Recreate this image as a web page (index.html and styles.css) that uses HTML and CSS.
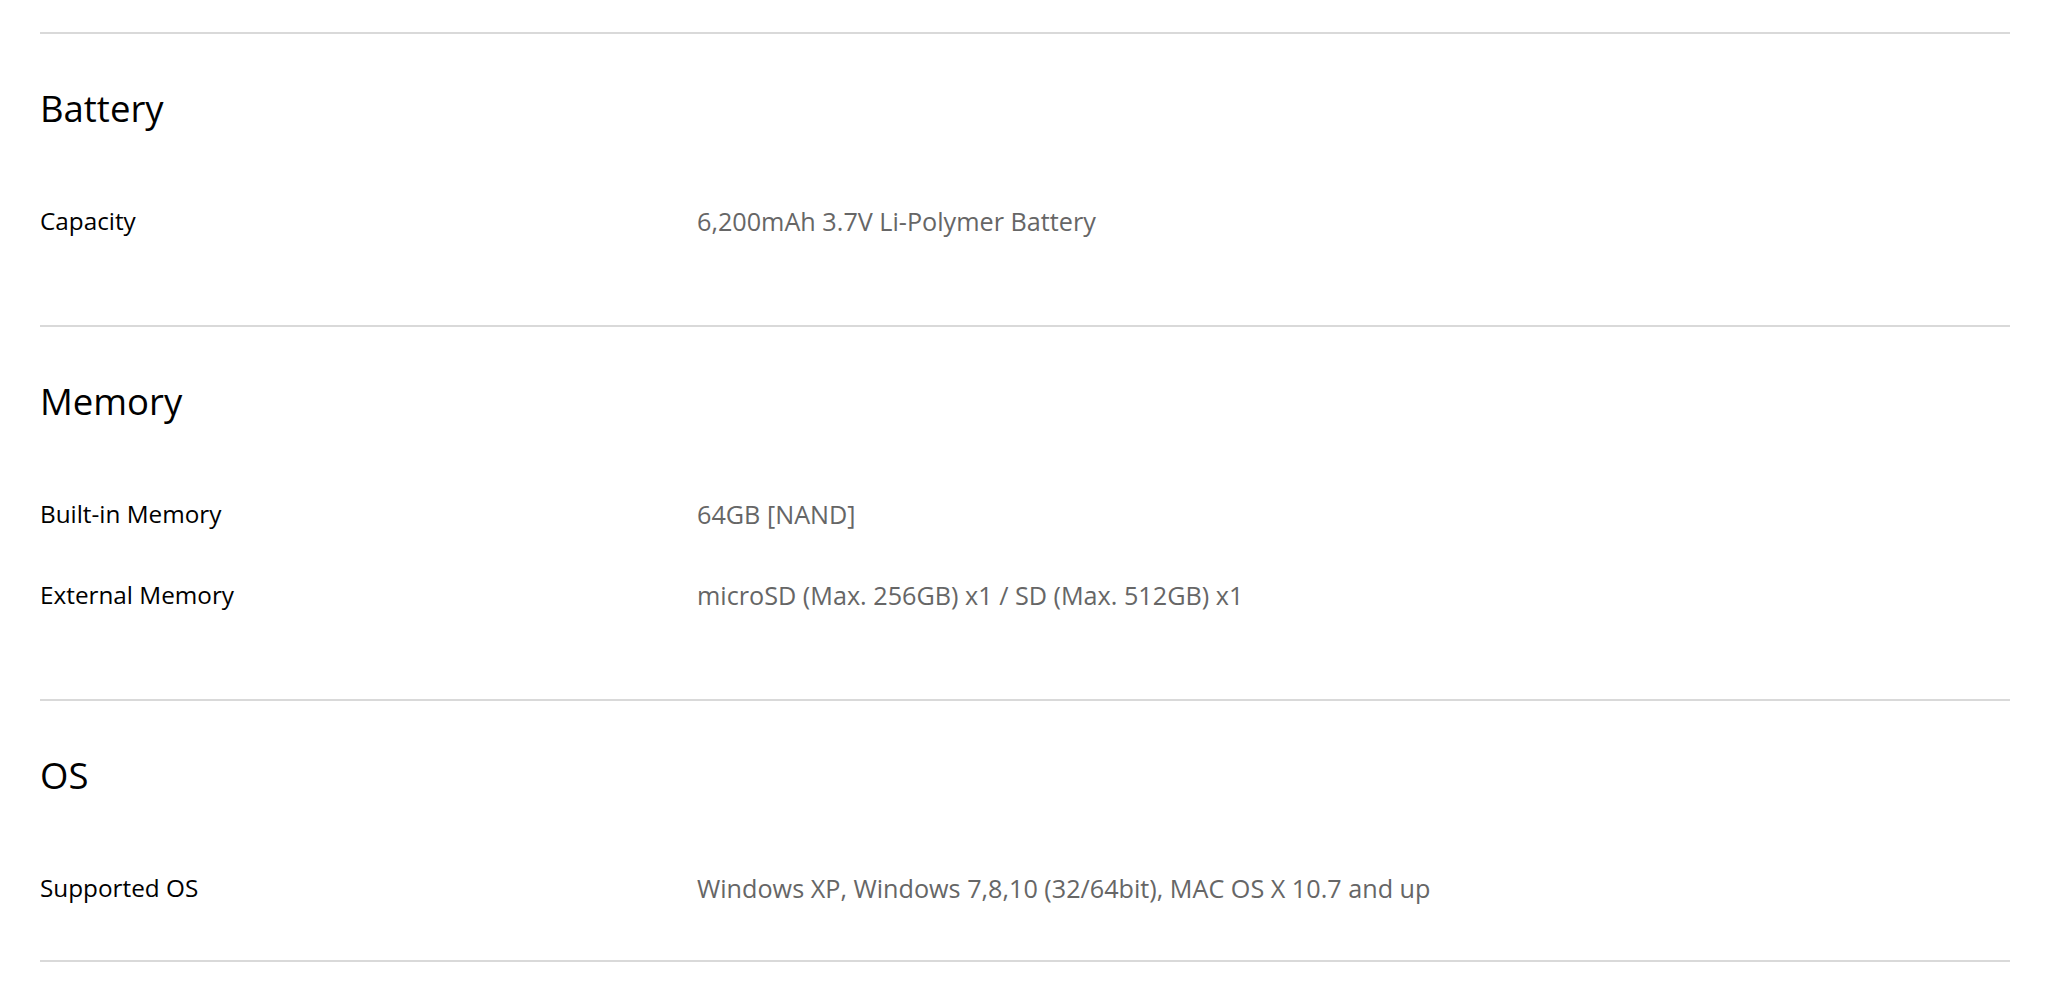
FILE: index.html
```html
<!DOCTYPE html>
<html lang="en">
<head>
<meta charset="utf-8">
<title>Specifications</title>
<link rel="stylesheet" href="styles.css">
</head>
<body>
<div class="specs">
  <section class="spec-group">
    <h2 class="spec-title">Battery</h2>
    <dl class="spec-rows">
      <dt class="spec-label">Capacity</dt>
      <dd class="spec-value">6,200mAh 3.7V Li-Polymer Battery</dd>
    </dl>
  </section>
  <section class="spec-group">
    <h2 class="spec-title">Memory</h2>
    <dl class="spec-rows">
      <dt class="spec-label">Built-in Memory</dt>
      <dd class="spec-value">64GB [NAND]</dd>
      <dt class="spec-label">External Memory</dt>
      <dd class="spec-value">microSD (Max. 256GB) x1 / SD (Max. 512GB) x1</dd>
    </dl>
  </section>
  <section class="spec-group spec-group-last">
    <h2 class="spec-title">OS</h2>
    <dl class="spec-rows">
      <dt class="spec-label">Supported OS</dt>
      <dd class="spec-value">Windows XP, Windows 7,8,10 (32/64bit), MAC OS X 10.7 and up</dd>
    </dl>
  </section>
</div>
</body>
</html>
```

FILE: styles.css
```css
html, body {
  margin: 0;
  padding: 0;
  background: #ffffff;
}

body {
  font-family: "Open Sans", "Noto Sans", "Liberation Sans", sans-serif;
  color: #000000;
}

.specs {
  padding: 32px 44px 0 40px;
}

.spec-group {
  border-top: 2px solid #d9d9d9;
  padding: 48px 0 88px;
}

.spec-group-last {
  padding-bottom: 56px;
  border-bottom: 2px solid #d9d9d9;
}

.spec-title {
  margin: 0;
  font-size: 36.5px;
  line-height: 52px;
  font-weight: 400;
  color: #000000;
}

.spec-rows {
  margin: 71px 0 0;
  display: grid;
  grid-template-columns: 657px 1fr;
  row-gap: 49px;
}

.spec-label,
.spec-value {
  margin: 0;
  line-height: 32px;
  font-weight: 400;
}

.spec-label {
  font-size: 24.3px;
  color: #000000;
}

.spec-value {
  font-size: 25.2px;
  color: #666666;
}
```
